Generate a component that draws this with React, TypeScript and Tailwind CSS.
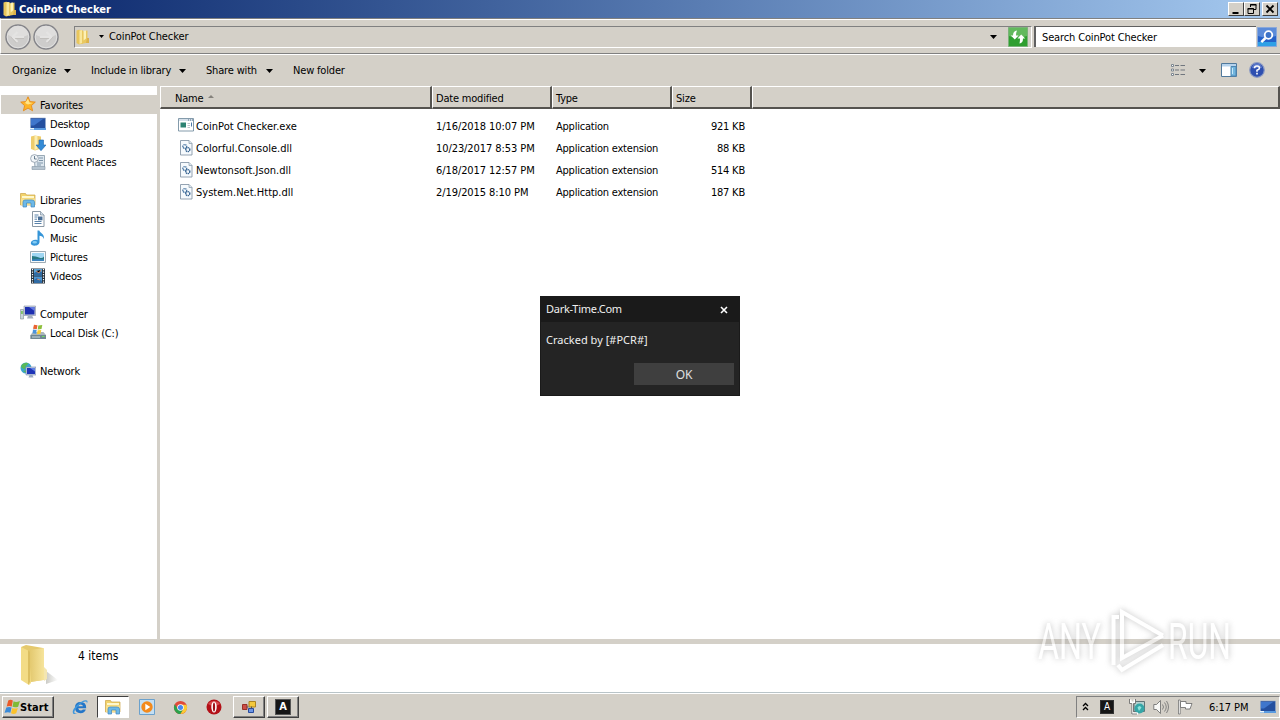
import React from "react";
import { clsx } from "clsx";

type IconProps = { className?: string };

const Svg: React.FC<IconProps & { children: React.ReactNode }> = ({ className = "size-4", children }) => (
  <svg viewBox="0 0 16 16" className={clsx("shrink-0", className)}>
    {children}
  </svg>
);

const FolderIcon: React.FC<IconProps> = ({ className }) => (
  <Svg className={className}>
    <path d="M1.500 1.500 4 .8l4 .7v13L4 15.600 1.500 14z" fill="#e9c65c" />
    <path d="M4.500 1.500 7 1v13l-2.500 1z" fill="#f9e79c" />
    <path d="M7 2.400 12.500 1.500v12.200L7 14.800z" fill="#e9c860" />
    <path d="M8.600 1.800 11 1.400v8l-2.400 2z" fill="#fdf1b5" />
    <path d="M12 9h2v5h-3z" fill="#dcb24c" />
  </Svg>
);

const StarIcon = () => (
  <Svg className="mb-[2px] size-4">
    <path
      d="m8 .8 2.100 4.800 5.200.5-3.900 3.500 1.200 5.200L8 12.100l-4.600 2.700 1.200-5.200L.7 6.100l5.200-.5z"
      fill="#fdb528"
      stroke="#e58a1c"
      strokeWidth=".9"
    />
    <path d="M8 2.800 9.400 6.500 13 6.900 8 8.500 5 7z" fill="#ffe489" />
  </Svg>
);

const DesktopIcon: React.FC<IconProps> = ({ className }) => (
  <Svg className={className}>
    <path d="M.5 2h15v11H.5z" fill="#244f9f" stroke="#93a9c8" strokeWidth=".6" />
    <path d="M1 3h12L4 9.500H1z" fill="#3f76cc" />
    <path d="M0 12h16v2H0z" fill="#5b9be0" />
    <path d="M0 12h4v1.500H0z" fill="#eaf6ff" />
  </Svg>
);

const DownloadsIcon = () => (
  <Svg>
    <path d="M1 1.500 5 .5l6 1v12L5 15.500 1 14z" fill="#efcd6c" />
    <path d="M4.500 1h3v13l-3 1z" fill="#fbeeb2" />
    <path d="M9 5h4.500v5H16l-5 5.700L6 10h3z" fill="#348bd6" stroke="#1e66ad" strokeWidth=".6" />
  </Svg>
);

const RecentIcon = () => (
  <Svg>
    <path d="M4 1.500h10.500v12H5z" fill="#dce6ee" stroke="#8395a5" strokeWidth=".8" />
    <path d="M2 12.500h13v3H2z" fill="#b6c4d0" stroke="#8395a5" strokeWidth=".6" />
    <path d="M9 4h4M9 6.500h4M7 9h6M7 11h4" stroke="#7e95a9" />
    <circle cx="4.500" cy="4.500" r="3.900" fill="#f2f6f9" stroke="#8a98a6" strokeWidth=".8" />
    <path d="M4.500 2V5h2.200" stroke="#4a6276" fill="none" strokeWidth=".8" />
  </Svg>
);

const LibraryIcon: React.FC<IconProps> = ({ className }) => (
  <Svg className={className}>
    <path d="M.5 1.500h5l1 1.500H15v10H.5z" fill="#f2d36c" stroke="#cba445" strokeWidth=".7" />
    <path d="M2 4h12v2H2z" fill="#fff8cc" />
    <path d="M1 6.500h14V13H1z" fill="#f8e08e" />
    <path d="M3 15V10q0-2 2-2h7q2.500 0 2.500 2v5H11v-4H6.500v4z" fill="#6db9e8" stroke="#3f86be" strokeWidth=".7" />
  </Svg>
);

const DocumentIcon = () => (
  <Svg>
    <path d="M2.500.5h8l3.500 3.500v11.500H2.500z" fill="#fff" stroke="#7d8c9b" strokeWidth=".9" />
    <path d="M10.500.5V4H14" fill="#d3e0eb" stroke="#7d8c9b" strokeWidth=".7" />
    <path d="M4.500 4h4M4.500 6h3M4.500 12.500h7M4.500 10.500h7" stroke="#5982aa" />
    <path d="M8 5.500h4.500v3.800H8z" fill="#4a6f96" />
    <path d="M4.500 8.200h2.500" stroke="#5982aa" />
  </Svg>
);

const MusicIcon = () => (
  <Svg>
    <path
      d="M7.500.5h1.800c.5 2.500 5.200 3 4.700 8.500-.9-2.300-2.600-3-4.500-3.200V12c0 4.500-8.700 4.800-8.700 1.200 0-2.900 4.200-4.200 6.700-3z"
      fill="#3595d8"
    />
    <ellipse cx="4.700" cy="12.300" rx="2.300" ry="1.300" fill="#84cdf5" />
  </Svg>
);

const PicturesIcon = () => (
  <Svg>
    <path d="M.5 2.500h15v11H.5z" fill="#f7fafc" stroke="#8795a1" strokeWidth=".8" />
    <path d="M2 4h12v8H2z" fill="#9fd6f2" />
    <path d="M2 7q4 0 7 1.500t5-1V12H2z" fill="#277a83" />
    <path d="M2 10.500q6-1 12 0V12H2z" fill="#3c84c0" />
  </Svg>
);

const VideosIcon = () => (
  <Svg>
    <path d="M1 .5h14v15H1z" fill="#24313d" />
    <path d="M4 1h8v6.500H4z" fill="#5ba3d6" />
    <path d="M4 8.500h8V15H4z" fill="#4e97d4" />
    <path d="M4 5q4-3 8-1v3.500H4zM4 12l3-2 5 3v2H4z" fill="#2f6ba4" />
    <path d="m6 3 3 2 2-3M7 11l3 1" stroke="#c68a6e" />
    <path d="M2.500 1v14M13.500 1v14" stroke="#fff" strokeWidth="1.200" strokeDasharray="1.300 1.200" />
  </Svg>
);

const ComputerIcon = () => (
  <Svg className="mb-[2px] size-4">
    <path d="M.5 4.500h3v9.500h-3z" fill="#c9d5da" stroke="#7f8e95" strokeWidth=".6" />
    <path d="M1.200 6h1.500v3H1.200z" fill="#6bbd4d" />
    <path d="M4 1h11.500v9.500H4z" fill="#cbd3de" stroke="#8791a5" strokeWidth=".6" />
    <path d="M5 2h9.500v7.500H5z" fill="#1d2fb0" />
    <path d="M9 2h5.500v4z" fill="#6279e2" />
    <path d="M8 10.500h4l1.500 3H7z" fill="#a4aebe" />
  </Svg>
);

const DiskIcon = () => (
  <Svg className="mb-[2px] size-4">
    <path d="m2 9 1.500-1h10L16 11v4H.5v-4z" fill="#a9b6bb" />
    <path d="M.5 11H16v4H.5z" fill="#708893" />
    <path d="M2 13h8" stroke="#c7d7de" />
    <path d="M12 12.500h2.500" stroke="#6be05c" />
    <path d="m4 .8 3.500.5-.7 4L3 4.800z" fill="#ea6432" />
    <path d="m8.300 1.500 4-.5-.8 4-3.800.5z" fill="#8dbf3a" />
    <path d="m3 5.600 3.700.5-.7 3.700-3.500-.5z" fill="#4a94dc" />
    <path d="m7.600 6.300 3.700-.4-.8 3.800-3.500.5z" fill="#f8cc35" />
  </Svg>
);

const NetworkIcon = () => (
  <Svg className="mb-[2px] size-4">
    <circle cx="6" cy="6" r="5.500" fill="#3ba4cf" />
    <path d="M2 2.500q4-3 6.500-1L6 4 4.500 7.500 1 5zM3 9l4-1v3.500z" fill="#59b957" />
    <path d="M6 5h10v8H6z" fill="#c6d0e4" stroke="#7787a7" strokeWidth=".6" />
    <path d="M7 6h8v6H7z" fill="#1f35b8" />
    <path d="M10 6h5v3.500z" fill="#6080e4" />
    <path d="M9.500 13h3l1 2.500h-5z" fill="#9dabc2" />
  </Svg>
);

const ExeIcon = () => (
  <Svg className="mb-[2px] size-4">
    <path d="M.5 1.500h15v12.500H.5z" fill="#fff" stroke="#7690a2" strokeWidth=".9" />
    <path d="M1 2h14v2H1z" fill="#d5e0ea" />
    <path d="M10 3h1M12 3h1M14 3h1" stroke="#526d87" />
    <path d="M2.500 5.500H8v5H2.500z" fill="#2d8272" />
    <path d="M9.500 6.500h2.500M9.500 8.500h2.500M9.500 10.500h2.500" stroke="#a8b4bd" strokeWidth=".8" />
    <path d="M13.500 5.500v4" stroke="#4a78a6" />
  </Svg>
);

const DllIcon = () => (
  <Svg>
    <path d="M2.500.5h8.500l3 3v11.500H2.500z" fill="#f6fafd" stroke="#8899a9" strokeWidth=".9" />
    <path d="M11 .5v3h3" fill="#dce6ef" stroke="#8899a9" strokeWidth=".7" />
    <circle cx="6.800" cy="6.500" r="1.900" fill="none" stroke="#42719f" strokeWidth="1.400" strokeDasharray="1.200 .5" />
    <circle cx="9.800" cy="9.600" r="2" fill="none" stroke="#33608f" strokeWidth="1.400" strokeDasharray="1.200 .5" />
  </Svg>
);

const FlagLogo = () => (
  <Svg className="size-[17px]">
    <path d="M4 1.500q2-1.500 4.300 0L7.300 7Q5 6 2.500 7z" fill="#ea5a28" />
    <path d="M9 2.200q2.500 1.300 6-.4l-1.700 5.400q-2.500 1.200-5.300.200z" fill="#7fba35" />
    <path d="M2.200 8q2.800-1 4.900 0L6 13q-2-1.200-5.500 0z" fill="#3a8ad8" />
    <path d="M7.800 8.400q2.500 1 5.200 0l-1.500 5.100q-2.500 1.200-4.900 0z" fill="#fbc22b" />
  </Svg>
);

const IeIcon = () => (
  <Svg>
    <path
      d="M14.200 9.300H6.200q.4 2.300 2.600 2.300 1.500 0 2-1.100h3.100Q12.600 14.200 8.500 14.200 3 14.200 3 8.500 3 3 8.600 3q5.800 0 5.600 6.300zM6.200 7.300h4.800Q10.700 5.500 8.600 5.500T6.200 7.300z"
      fill="#2376c8"
    />
    <path
      d="M1.300 14.700Q-.8 11.500 5 6 11.500.3 15 1.500q1.200.8-.3 3.500.6-2.400-1-2.400-3.200.2-7.800 4.800-4.400 4.700-3.300 6.500 1 1 3.500-.5-3.300 2.500-4.800 1.300z"
      fill="#3e97dd"
    />
  </Svg>
);

const WmpIcon = () => (
  <Svg>
    <path d="M.5.5h15v15H.5z" fill="#c4dff3" stroke="#6ba1cc" />
    <circle cx="8" cy="8" r="5.700" fill="#f38a1c" />
    <path d="m6.300 4.800 5 3.200-5 3.200z" fill="#fff" />
  </Svg>
);

const ChromeIcon = () => (
  <Svg className="size-[15px]">
    <circle cx="8" cy="8" r="7" fill="#e04a3a" />
    <path d="M1.940 4.500A7 7 0 0 0 8 15l3-5.250L5 9.700z" fill="#2ba24c" />
    <path d="M14.300 5H8l3 4.750L8 15A7 7 0 0 0 14.300 5z" fill="#fbcc34" />
    <circle cx="8" cy="8" r="3.500" fill="#fff" />
    <circle cx="8" cy="8" r="2.700" fill="#4688ee" />
  </Svg>
);

const OperaIcon = () => (
  <Svg>
    <circle cx="8" cy="8" r="7.500" fill="#b31017" />
    <path d="M2 5a7 6 0 0 1 12 0q-6 4-12 0z" fill="#d8474c" />
    <ellipse cx="8" cy="8" rx="2.700" ry="5.500" fill="#fff" />
    <ellipse cx="8" cy="8" rx="1.100" ry="4.600" fill="#9f1018" />
  </Svg>
);

const WinFormsIcon = () => (
  <Svg>
    <path d="M8 2.500h6.500v5.500H8z" fill="#f4c93b" stroke="#ad8421" />
    <path d="M1.500 5.500h4.500v5h-4.500z" fill="#cd4d46" stroke="#983028" />
    <path d="M7.500 9.500h5v4h-5z" fill="#6c95e4" stroke="#274a9d" />
    <path d="M5.500 8h2M10.500 7.500v2" stroke="#555" />
  </Svg>
);

const ABadge: React.FC<{ small?: boolean }> = ({ small }) => (
  <span
    className={clsx(
      "flex items-center justify-center border bg-[#161616] text-white",
      small ? "size-[14px] border-[#333] text-[10px]" : "size-4 border-[#555] text-[11px] font-bold"
    )}
  >
    A
  </span>
);

const Caret = () => (
  <svg viewBox="0 0 7 4" className="h-1 w-[7px] shrink-0">
    <path d="M0 0h7L3.500 4z" fill="#000" />
  </svg>
);

const RoundArrow: React.FC<{ forward?: boolean }> = ({ forward }) => (
  <svg viewBox="0 0 26 26" className="size-[26px] shrink-0">
    <circle cx="13" cy="13" r="12" fill="#c9c8c6" stroke="#85858a" strokeWidth="1.500" />
    <circle cx="13" cy="13" r="10.800" fill="#cdcccb" stroke="#e6e6e6" strokeWidth=".8" />
    <path d="M3 11a10 9 0 0 1 20 0q-10 5-20 0z" fill="#dfdedd" />
    <path
      d={forward ? "M7 13h11M13.500 8l5 5-5 5" : "M19 13H8M12.500 8l-5 5 5 5"}
      fill="none"
      stroke="#e4e3e2"
      strokeWidth="2.200"
    />
    <path
      d={forward ? "M7 14.500h9M14.500 19l5.500-6" : "M19 14.500h-9M11.500 19 6 13"}
      fill="none"
      stroke="#bbb9b6"
      strokeWidth=".7"
    />
  </svg>
);

const RefreshIcon = () => (
  <svg viewBox="0 0 20 20" className="size-5 shrink-0">
    <path d="M.5.5h19v19H.5z" fill="#2f9f30" stroke="#7bb27a" />
    <path d="M1 1h18v8Q10 12 1 9z" fill="#62b95d" />
    <path d="M9 3.500Q5 4 5 8.500H2.800l4 4L10.500 8.500H8Q8 5.500 9 3.500z" fill="#fff" />
    <path d="M11.500 16.500q3.500-.5 3.500-5h2.200l-4-4L9.500 11.500H12q0 3-.5 5z" fill="#fff" />
  </svg>
);

const SearchIcon = () => (
  <svg viewBox="0 0 20 20" className="size-5 shrink-0">
    <path d="M.5.5h19v19H.5z" fill="#2461c9" stroke="#89a8da" />
    <path d="M1 1h18v8Q10 12 1 9z" fill="#5b8bd9" />
    <path d="M1 15h18v4H1z" fill="#2fa0e6" />
    <circle cx="11.500" cy="8" r="3.800" fill="#3d73c8" stroke="#fff" strokeWidth="1.800" />
    <path d="m8.500 11-4.200 4.200" stroke="#fff" strokeWidth="2.500" />
  </svg>
);

const WindowButton: React.FC<{ kind: "min" | "restore" | "close" }> = ({ kind }) => (
  <span className="flex h-[14px] w-4 items-center justify-center border border-t-white border-r-[#404040] border-b-[#404040] border-l-white bg-[#d4d0c8]">
    <svg viewBox="0 0 12 12" className="size-3" fill="none" stroke="#000">
      {kind === "min" && <path d="M2.500 10h6" strokeWidth="2" />}
      {kind === "restore" && <path d="M4.500 4V1.500h5.500v5H8M4 2h6.500M2 5.500h5.500v5H2zM1.500 6h6.500" />}
      {kind === "close" && <path d="m2.500 2.500 7 7m0-7-7 7" strokeWidth="1.800" />}
    </svg>
  </span>
);

type NavItem = { label: string; icon: React.ReactNode };

const navGroups: { head: NavItem; items: NavItem[] }[] = [
  {
    head: { label: "Favorites", icon: <StarIcon /> },
    items: [
      { label: "Desktop", icon: <DesktopIcon /> },
      { label: "Downloads", icon: <DownloadsIcon /> },
      { label: "Recent Places", icon: <RecentIcon /> },
    ],
  },
  {
    head: { label: "Libraries", icon: <LibraryIcon /> },
    items: [
      { label: "Documents", icon: <DocumentIcon /> },
      { label: "Music", icon: <MusicIcon /> },
      { label: "Pictures", icon: <PicturesIcon /> },
      { label: "Videos", icon: <VideosIcon /> },
    ],
  },
  {
    head: { label: "Computer", icon: <ComputerIcon /> },
    items: [{ label: "Local Disk (C:)", icon: <DiskIcon /> }],
  },
  { head: { label: "Network", icon: <NetworkIcon /> }, items: [] },
];

const files = [
  { name: "CoinPot Checker.exe", date: "1/16/2018 10:07 PM", type: "Application", size: "921 KB" },
  { name: "Colorful.Console.dll", date: "10/23/2017 8:53 PM", type: "Application extension", size: "88 KB" },
  { name: "Newtonsoft.Json.dll", date: "6/18/2017 12:57 PM", type: "Application extension", size: "514 KB" },
  { name: "System.Net.Http.dll", date: "2/19/2015 8:10 PM", type: "Application extension", size: "187 KB" },
];

const TitleBar = () => (
  <div className="flex h-[18px] items-center bg-linear-to-r from-[#0a246a] to-[#a6caf0] pr-[2px] pl-[2px]">
    <FolderIcon />
    <span className="ml-px pt-px text-[11px] font-bold tracking-[0.03px] text-white">CoinPot Checker</span>
    <div className="ml-auto flex">
      <WindowButton kind="min" />
      <WindowButton kind="restore" />
      <span className="w-[2px]" />
      <WindowButton kind="close" />
    </div>
  </div>
);

const AddressBar = () => (
  <div className="flex h-[36px] items-center border-t border-b border-l border-t-[#808080] border-b-[#808080] border-l-white pt-px pl-1 shadow-[inset_0_1px_0_#fff]">
    <div className="flex w-[56px] gap-[2px]">
      <RoundArrow />
      <RoundArrow forward />
    </div>
    <div className="ml-[13px] flex h-[22px] w-[932px] items-center border border-r-0 border-t-[#808080] border-b-white border-l-[#808080]">
      <FolderIcon />
      <span className="w-[8px]" />
      <svg viewBox="0 0 5 3" className="h-[3px] w-[5px]">
        <path d="M0 0h5L2.500 3z" />
      </svg>
      <span className="ml-[5px] tracking-[-0.1px]">CoinPot Checker</span>
      <div className="mr-[9px] ml-auto">
        <Caret />
      </div>
    </div>
    <div className="flex h-[22px] w-[26px] items-center border-t border-r border-b border-t-[#808080] border-r-white border-b-white pl-[2px]">
      <RefreshIcon />
    </div>
    <div className="ml-[2px] flex h-[21px] w-[222px] items-center border-t border-l-2 border-[#606060] bg-white pt-px pl-[6px] tracking-[-0.14px]">
      Search CoinPot Checker
    </div>
    <div className="ml-[1px]">
      <SearchIcon />
    </div>
  </div>
);

const CommandBar = () => (
  <div className="flex h-8 items-center border-t border-white pl-3 tracking-[-0.17px]">
    <span className="w-[52px] tracking-[0px]">Organize</span>
    <Caret />
    <span className="ml-5 w-[88px]">Include in library</span>
    <Caret />
    <span className="ml-5 w-[60px]">Share with</span>
    <Caret />
    <span className="ml-5">New folder</span>
    <div className="mr-[15px] ml-auto flex items-center">
      <Svg className="mb-[2px] size-4">
        <path d="M1.500 2.500h2v2h-2zM1.500 7h2v2h-2zM1.500 11.500h2v2h-2z" fill="#fff" stroke="#7c8690" />
        <path d="M5 3.500h4M10.500 3.500H15M5 8h4M10.500 8H15M5 12.500h4M10.500 12.500H15" stroke="#70767e" />
      </Svg>
      <span className="w-[13px]" />
      <Caret />
      <span className="w-[15px]" />
      <Svg className="mb-[2px] size-4">
        <path d="M.5 1.500h15v13H.5z" fill="#fff" stroke="#50799c" />
        <path d="M1 2h14v2.500H1z" fill="#b6d3ed" />
        <path d="M10 4.500h5V14h-5z" fill="#72b6df" stroke="#4d86b2" />
        <path d="M11.500 6v6" stroke="#c5e8fa" />
      </Svg>
      <span className="w-3" />
      <Svg className="mb-[2px] size-4">
        <circle cx="8" cy="8" r="7.300" fill="#2e4fb0" stroke="#8c9bc4" strokeWidth="1.200" />
        <path d="M3 6a5 4.500 0 0 1 10 0z" fill="#5b77c9" />
        <path
          d="M5.500 6.200Q5.500 4 8 4t2.500 2.100Q10.500 7.500 8 8.300v1.500M8 10.800v1.700"
          stroke="#fff"
          strokeWidth="1.600"
          fill="none"
        />
      </Svg>
    </div>
  </div>
);

const NavRow: React.FC<NavItem & { head?: boolean; selected?: boolean }> = ({ label, icon, head, selected }) => (
  <div
    className={clsx(
      "flex h-[19px] items-center gap-1",
      head ? "pl-[19px]" : "pl-[29px]",
      selected && "bg-[#d4d0c8]"
    )}
  >
    {icon}
    <span className="pt-[2px]">{label}</span>
  </div>
);

const Sidebar = () => (
  <div className="flex w-[160px] shrink-0 flex-col gap-[19px] border-r-[3px] border-[#d4d0c8] bg-white pt-[9px] pl-px tracking-[-0.18px]">
    {navGroups.map((group, i) => (
      <div key={group.head.label}>
        <NavRow {...group.head} head selected={i === 0} />
        {group.items.map((item) => (
          <NavRow key={item.label} {...item} />
        ))}
      </div>
    ))}
  </div>
);

const HeaderCell: React.FC<{ className: string; children?: React.ReactNode }> = ({ className, children }) => (
  <div
    className={clsx(
      "flex h-[23px] items-center border-t border-r-2 border-b-2 border-l border-t-white border-r-[#55534f] border-b-[#55534f] border-l-white bg-[#d4d0c8] pt-[3px]",
      className
    )}
  >
    {children}
  </div>
);

const FileList = () => (
  <div className="flex grow flex-col bg-white">
    <div className="flex">
      <HeaderCell className="w-[272px] gap-[5px] pl-[14px]">
        <span>Name</span>
        <svg viewBox="0 0 6 3" className="mb-[4px] h-[3px] w-[6px]">
          <path d="M3 0l3 3H0z" fill="#85827c" />
        </svg>
      </HeaderCell>
      <HeaderCell className="w-[120px] pl-[3px]">Date modified</HeaderCell>
      <HeaderCell className="w-[120px] pl-[3px]">Type</HeaderCell>
      <HeaderCell className="w-[80px] pl-[3px]">Size</HeaderCell>
      <HeaderCell className="grow" />
    </div>
    <div className="pt-[6px] pl-[18px]">
      {files.map((file, i) => (
        <div key={file.name} className="flex h-[22px] items-center">
          {i === 0 ? <ExeIcon /> : <DllIcon />}
          <span className="ml-[2px] w-[240px] pt-[2px] tracking-[0.02px]">{file.name}</span>
          <span className="w-[120px] pt-[2px] tracking-[-0.08px]">{file.date}</span>
          <span className="w-[120px] pt-[2px] tracking-[-0.22px]">{file.type}</span>
          <span className="w-[69px] pt-[2px] text-right">{file.size}</span>
        </div>
      ))}
    </div>
  </div>
);

const DetailsPane = () => (
  <div className="flex h-[53px] border-t-[5px] border-[#d4d0c8] bg-white pl-[18px]">
    <svg viewBox="0 0 42 46" className="h-[46px] w-[42px]">
      <defs>
        <linearGradient id="fold" x1="0" x2="1">
          <stop offset="0" stopColor="#e2c76c" />
          <stop offset="1" stopColor="#f6e49c" />
        </linearGradient>
        <linearGradient id="shade" x1="0" x2="1">
          <stop offset="0" stopColor="#a8a8a0" />
          <stop offset="1" stopColor="#fff" />
        </linearGradient>
      </defs>
      <path d="m28 27 12 9-12 4z" fill="url(#shade)" opacity=".6" />
      <path d="M3 3 8 1l17 3v32l-13 2z" fill="#e5c96e" />
      <path d="m11 6 15-2v32l-14 2z" fill="url(#fold)" />
      <path d="m3 3 8 4 2 32-2 2-8-5z" fill="#f3dc86" />
      <path d="m10 6 2 2v30l-2 3z" fill="#dcbf61" />
      <path d="m26 23 3 3v9l-3 2z" fill="#f4e6b0" />
    </svg>
    <span className="mt-[4px] ml-[18px] text-[12px] tracking-[0px]">4 items</span>
  </div>
);

const MessageDialog = () => (
  <div className="absolute top-[296px] left-[540px] flex h-[100px] w-[200px] flex-col border border-[#1a1a1a] bg-[#242424] font-['Noto_Sans','Open_Sans',sans-serif] text-[11px] text-[#f0f0f0]">
    <div className="flex h-[25px] items-center justify-between bg-[#1a1a1a] pr-[11px] pl-[5px]">
      <span className="pb-[2px] tracking-[-0.28px]">Dark-Time.Com</span>
      <svg viewBox="0 0 8 8" className="size-2" stroke="#fff" strokeWidth="1.600">
        <path d="m1 1 6 6m0-6L1 7" />
      </svg>
    </div>
    <p className="mt-[10px] pl-[5px] tracking-[0.02px]">Cracked by [#PCR#]</p>
    <button className="mt-auto mr-[5px] mb-[10px] ml-auto flex h-[22px] w-[100px] items-center justify-center bg-[#3f3f3f] pt-[2px] text-[12px] text-[#e0e0e0]">
      OK
    </button>
  </div>
);

const Watermark = () => (
  <svg
    viewBox="0 0 250 90"
    className="absolute top-[600px] left-[1030px] h-[90px] w-[250px] overflow-visible tracking-normal drop-shadow-[0_0_3px_#909090]"
    fill="#fff"
    opacity=".55"
  >
    <text x="8" y="59" fontSize="50" textLength="63" lengthAdjust="spacingAndGlyphs" fontFamily="Roboto, sans-serif">
      ANY
    </text>
    <text x="138" y="59" fontSize="50" textLength="63" lengthAdjust="spacingAndGlyphs" fontFamily="Roboto, sans-serif">
      RUN
    </text>
    <g fill="none" stroke="#fff" strokeWidth="4">
      <path d="M89 17h-5.500v48" />
      <path d="M92 43V12l41 23.500-11-6M92 40v18l41-22.500" />
      <path d="m88 65 4 5 41-25" />
    </g>
  </svg>
);

const TaskButton: React.FC<{ active?: boolean; children: React.ReactNode }> = ({ active, children }) => (
  <div
    className={clsx(
      "flex h-[22px] w-8 items-center justify-center border",
      active
        ? "border-t-[#404040] border-r-white border-b-white border-l-[#404040] bg-white"
        : "border-t-white border-r-[#404040] border-b-[#404040] border-l-white shadow-[inset_-1px_-1px_0_#808080]"
    )}
  >
    {children}
  </div>
);

const Taskbar = () => (
  <div className="flex h-[28px] items-center border-t border-[#b9c4c8] pt-px pl-[2px] shadow-[inset_0_1px_0_#fff]">
    <div className="flex h-[22px] w-[52px] items-center border border-t-white border-r-[#404040] border-b-[#404040] border-l-white pl-px text-[11px] font-bold tracking-[0.1px] shadow-[inset_-1px_-1px_0_#808080]">
      <FlagLogo />
      <span className="-ml-px pt-px">Start</span>
    </div>
    <div className="ml-[18px] flex w-[25px]">
      <IeIcon />
    </div>
    <TaskButton active>
      <LibraryIcon />
    </TaskButton>
    <div className="ml-[10px] flex w-[34px]">
      <WmpIcon />
    </div>
    <div className="flex w-[33px]">
      <ChromeIcon />
    </div>
    <div className="flex w-[27px]">
      <OperaIcon />
    </div>
    <div className="flex gap-[2px]">
      <TaskButton>
        <WinFormsIcon />
      </TaskButton>
      <TaskButton>
        <ABadge />
      </TaskButton>
    </div>
    <div className="ml-auto flex h-[22px] w-[204px] items-center border border-t-[#808080] border-r-white border-b-white border-l-[#808080] pl-[5px]">
      <svg viewBox="0 0 7 9" className="mb-[2px] h-[9px] w-[7px]" fill="none" stroke="#000" strokeWidth="1.300">
        <path d="M1 4l2.500-2.500L6 4M1 8l2.500-2.500L6 8" />
      </svg>
      <span className="w-[11px]" />
      <ABadge small />
      <span className="w-[15px]" />
      <Svg>
        <path d="M5 2.500h10.500v10H5z" fill="#b5d2d1" stroke="#617377" />
        <circle cx="10.500" cy="9.500" r="5" fill="#35a6a7" />
        <path d="M8.500 8.500q2-3 4 0L10 12z" fill="#8ee3dc" />
        <path d="M1.500.5v3h4v-3M3.500 4v10.500H9" fill="none" stroke="#fff" strokeWidth="2" />
        <path d="M.5 0v4.500h2.300V15H8M6.500 0v4.500H4.500V13" fill="none" stroke="#606060" strokeWidth=".8" />
      </Svg>
      <span className="w-2" />
      <Svg>
        <path d="M.8 5.500h2.700L7.500 1.500v13l-4-4H.8z" fill="#f8f8f6" stroke="#666" strokeWidth=".8" />
        <path
          d="M9.500 5.500q2 2.500 0 5M11.500 3.500q3.500 4.500 0 9M13.500 2q4 6 0 12"
          fill="none"
          stroke="#777"
          strokeWidth=".9"
        />
      </Svg>
      <span className="w-2" />
      <Svg>
        <path d="M1.500 1h1.700v14H1.500z" fill="#fff" stroke="#666" strokeWidth=".7" />
        <path d="M3.500 2.500H9v2h6L13 10H8.500V8.500h-5z" fill="#fff" stroke="#666" strokeWidth=".8" />
      </Svg>
      <span className="ml-[16px] w-[51px] pt-[2px] tracking-[-0.05px]">6:17 PM</span>
      <DesktopIcon />
    </div>
  </div>
);

const App: React.FC = () => (
  <div className="relative flex h-[720px] w-[1280px] flex-col overflow-hidden bg-[#d4d0c8] font-['DejaVu_Sans_Condensed','DejaVu_Sans',sans-serif] text-[11px] leading-4 tracking-[-0.2px] whitespace-nowrap text-black">
    <TitleBar />
    <AddressBar />
    <CommandBar />
    <div className="flex min-h-0 grow">
      <Sidebar />
      <FileList />
    </div>
    <DetailsPane />
    <Taskbar />
    <MessageDialog />
    <Watermark />
  </div>
);

export default App;
